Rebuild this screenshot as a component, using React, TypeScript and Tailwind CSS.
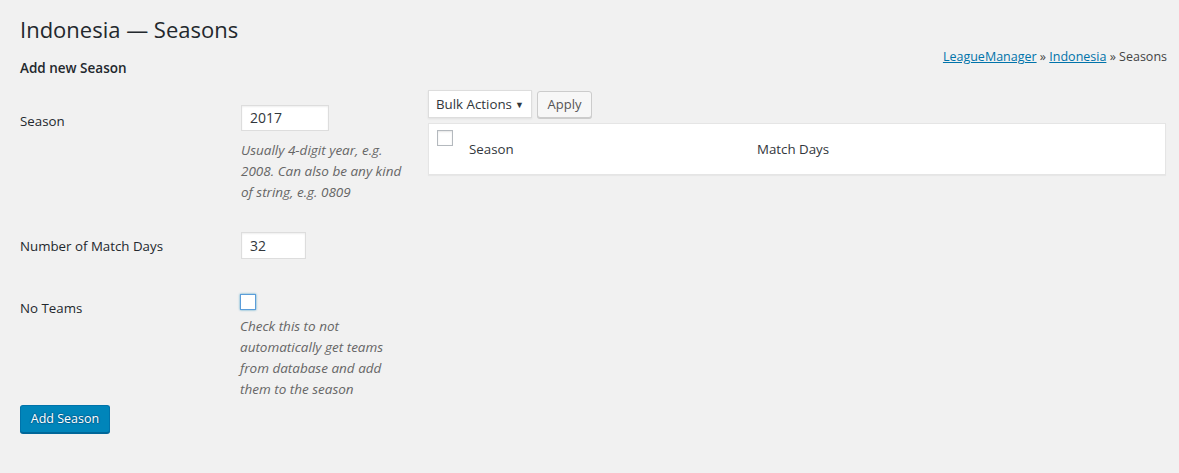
import React from "react";

const font = { fontFamily: '"Open Sans", "Noto Sans", sans-serif' };

export default function App() {
  return (
    <div
      className="min-h-[473px] w-full bg-[#f1f1f1] text-[#444] text-[13px]"
      style={font}
    >
      <div className="pl-5 pr-3">
        <h1 className="pt-[14px] text-[22px] leading-[31px] font-normal text-[#23282d]">
          Indonesia — Seasons
        </h1>
        <div className="flex items-start">
          <h3 className="mt-[13px] text-[13.5px] font-semibold text-[#23282d] leading-[20px]">
            Add new Season
          </h3>
          <div className="ml-auto mt-[2px] text-[12.5px] leading-[20px] text-[#444]">
            <a className="text-[#0073aa] underline" href="#">LeagueManager</a>
            {" » "}
            <a className="text-[#0073aa] underline" href="#">Indonesia</a>
            {" » Seasons"}
          </div>
        </div>

        <div className="flex items-start">
          {/* left column */}
          <div className="w-[408px] shrink-0">
            <div className="mt-[27px] flex">
              <div className="w-[221px] pt-[6px] text-[13.3px] leading-[20px] text-[#23282d]">Season</div>
              <div className="w-[168px]">
                <div className="h-[26px] w-[88px] border border-[#ddd] bg-white shadow-[inset_0_1px_2px_rgba(0,0,0,0.07)] px-[8px] text-[14px] leading-[24px] text-[#32373c]">
                  2017
                </div>
                <p className="mt-[9px] text-[13.5px] italic leading-[21px] text-[#666]">
                  Usually 4-digit year, e.g. 2008. Can also be any kind of string, e.g. 0809
                </p>
              </div>
            </div>

            <div className="mt-[29px] flex">
              <div className="w-[221px] pt-[4px] text-[13.3px] leading-[20px] text-[#23282d]">Number of Match Days</div>
              <div className="h-[27px] w-[65px] border border-[#ddd] bg-white shadow-[inset_0_1px_2px_rgba(0,0,0,0.07)] px-[8px] text-[14px] leading-[25px] text-[#32373c]">
                32
              </div>
            </div>

            <div className="mt-[35px] flex">
              <div className="w-[220px] pt-[4px] text-[13.3px] leading-[20px] text-[#23282d]">No Teams</div>
              <div className="w-[168px]">
                <div className="h-4 w-4 border border-[#5b9dd9] bg-white shadow-[0_0_2px_rgba(30,140,190,0.8)]" />
                <p className="mt-[6px] text-[13.5px] italic leading-[21px] text-[#666]">
                  Check this to not automatically get teams from database and add them to the season
                </p>
              </div>
            </div>

            <button className="mt-[5px] h-[28px] w-[90px] rounded-[3px] border border-[#0073aa] border-b-[#006799] bg-[#0085ba] text-[12.5px] text-white shadow-[0_1px_0_#006799] [text-shadow:0_-1px_1px_#006799,1px_0_1px_#006799,0_1px_1px_#006799,-1px_0_1px_#006799]">
              Add Season
            </button>
          </div>

          {/* right column */}
          <div className="flex-1 pt-[12px]">
            <div className="flex items-start gap-[5px]">
              <div className="flex h-[28px] w-[104px] items-center border border-[#ddd] bg-white pl-[7px] pr-[7px] pt-[1px] text-[13.3px] text-[#32373c] shadow-[0_1px_2px_rgba(0,0,0,0.07)]">
                <span>Bulk Actions</span>
                <span className="ml-auto text-[9px]">▼</span>
              </div>
              <button className="mt-[1px] h-[27px] w-[55px] rounded-[3px] border border-[#ccc] bg-[#f7f7f7] text-[13px] text-[#555] shadow-[0_1px_0_#ccc]">
                Apply
              </button>
            </div>
            <div className="mt-[5px] h-[52px] w-[738px] border border-[#e5e5e5] bg-white shadow-[0_1px_1px_rgba(0,0,0,0.04)]">
              <div className="flex">
                <div className="ml-[8px] mt-[6px] h-4 w-4 border border-[#b4b9be] bg-white shadow-[inset_0_1px_2px_rgba(0,0,0,0.1)]" />
                <div className="ml-[16px] mt-[15px] w-[288px] text-[13.3px] leading-[20px] text-[#32373c]">Season</div>
                <div className="mt-[15px] text-[13.3px] leading-[20px] text-[#32373c]">Match Days</div>
              </div>
            </div>
          </div>
        </div>
      </div>
    </div>
  );
}
